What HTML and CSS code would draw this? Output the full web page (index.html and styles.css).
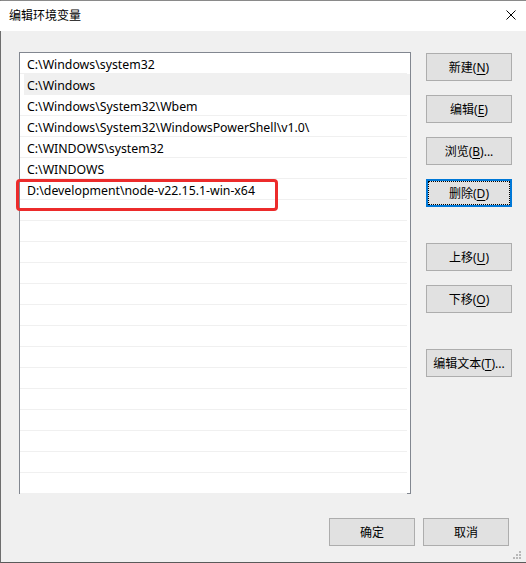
FILE: index.html
```html
<!DOCTYPE html>
<html lang="zh-CN">
<head>
    <meta charset="UTF-8">
    <title>编辑环境变量</title>
    <link rel="stylesheet" href="styles.css">
</head>
<body>
    <div class="window">
        <!-- Title Bar -->
        <div class="titlebar">
            <span class="title">编辑环境变量</span>
            <svg class="close" width="10" height="10" viewBox="0 0 10 10">
                <path d="M0.5 0.5 L9.5 9.5 M9.5 0.5 L0.5 9.5" stroke="#000" stroke-width="1" fill="none"/>
            </svg>
        </div>

        <div class="content">
            <div class="main">
                <!-- Path List -->
                <div class="list">
                    <div class="row">C:\Windows\system32</div>
                    <div class="row selected">C:\Windows</div>
                    <div class="row">C:\Windows\System32\Wbem</div>
                    <div class="row">C:\Windows\System32\WindowsPowerShell\v1.0\</div>
                    <div class="row">C:\WINDOWS\system32</div>
                    <div class="row">C:\WINDOWS</div>
                    <div class="row">D:\development\node-v22.15.1-win-x64</div>
                    <div class="row"></div>
                    <div class="row"></div>
                    <div class="row"></div>
                    <div class="row"></div>
                    <div class="row"></div>
                    <div class="row"></div>
                    <div class="row"></div>
                    <div class="row"></div>
                    <div class="row"></div>
                    <div class="row"></div>
                    <div class="row"></div>
                    <div class="row"></div>
                    <div class="row"></div>
                    <div class="row"></div>
                    <div class="highlight"></div>
                </div>

                <!-- Side Buttons -->
                <div class="side-buttons">
                    <button class="btn">新建(<u>N</u>)</button>
                    <button class="btn">编辑(<u>E</u>)</button>
                    <button class="btn">浏览(<u>B</u>)...</button>
                    <button class="btn focused">删除(<u>D</u>)</button>
                    <button class="btn spaced">上移(<u>U</u>)</button>
                    <button class="btn">下移(<u>O</u>)</button>
                    <button class="btn spaced">编辑文本(<u>T</u>)...</button>
                </div>
            </div>

            <!-- Dialog Buttons -->
            <div class="footer">
                <button class="btn">确定</button>
                <button class="btn">取消</button>
            </div>
        </div>

        <svg class="grip" width="8" height="8" viewBox="0 0 8 8">
            <rect x="6" y="0" width="2" height="2" fill="#b8b8b8"/>
            <rect x="3" y="3" width="2" height="2" fill="#b8b8b8"/>
            <rect x="6" y="3" width="2" height="2" fill="#b8b8b8"/>
            <rect x="0" y="6" width="2" height="2" fill="#b8b8b8"/>
            <rect x="3" y="6" width="2" height="2" fill="#b8b8b8"/>
            <rect x="6" y="6" width="2" height="2" fill="#b8b8b8"/>
        </svg>
    </div>
</body>
</html>
```

FILE: styles.css
```css
/* General Styles */
* {
    box-sizing: border-box;
}

body {
    margin: 0;
    padding: 0;
    font-family: "Noto Sans", "Noto Sans CJK SC", sans-serif;
    font-size: 12px;
    color: #000;
    background: #fff;
}

.window {
    position: relative;
    width: 526px;
    height: 563px;
    background: #f0f0f0;
    border-left: 1px solid #6e6e6e;
    border-bottom: 1px solid #5a5a5a;
    border-top: 1px solid #8a8a8a;
}

/* Title Bar */
.titlebar {
    height: 30px;
    background: #fff;
    display: flex;
    align-items: center;
    justify-content: space-between;
    margin-left: -1px;
    padding: 0 10px 2px 9px;
}

.title {
    font-family: "Noto Sans CJK SC", sans-serif;
    font-size: 12px;
    line-height: 16px;
}

.close {
    display: block;
}

/* Content */
.content {
    padding: 21px 14px 0 18px;
}

.main {
    display: flex;
    gap: 15px;
}

.list {
    position: relative;
    width: 392px;
    height: 442px;
    background: #fff;
    border: 1px solid #828790;
}

.row {
    height: 21px;
    line-height: 19px;
    padding: 2px 0 0 7px;
    border-bottom: 1px solid #f0f0f0;
    margin-right: 3px;
    font-size: 12.3px;
    white-space: nowrap;
}

.row:last-of-type {
    border-bottom: none;
    height: 20px;
}

.row.selected {
    background: #f0f0f0;
    margin-left: 4px;
    margin-right: 0;
    padding-left: 3px;
}

.highlight {
    position: absolute;
    left: -4px;
    top: 126px;
    width: 262px;
    height: 32px;
    border: 3px solid #ec2b2b;
    border-radius: 4px;
}

/* Buttons */
.side-buttons {
    display: flex;
    flex-direction: column;
    gap: 14px;
    padding-top: 1px;
}

.btn {
    width: 86px;
    height: 28px;
    padding: 0;
    background: #e1e1e1;
    border: 1px solid #adadad;
    font-family: "Noto Sans", "Noto Sans CJK SC", sans-serif;
    font-size: 12px;
    color: #000;
    white-space: nowrap;
}

.btn u {
    text-decoration-thickness: 1px;
    text-underline-offset: 2px;
}

.btn.focused {
    border: 2px solid #0078d7;
    outline: 1px dotted #000;
    outline-offset: -3px;
}

.btn.spaced {
    margin-top: 22px;
}

.footer {
    display: flex;
    justify-content: flex-end;
    gap: 8px;
    margin-top: 24px;
    padding-right: 3px;
}

.grip {
    position: absolute;
    right: 5px;
    bottom: 3px;
}
```
